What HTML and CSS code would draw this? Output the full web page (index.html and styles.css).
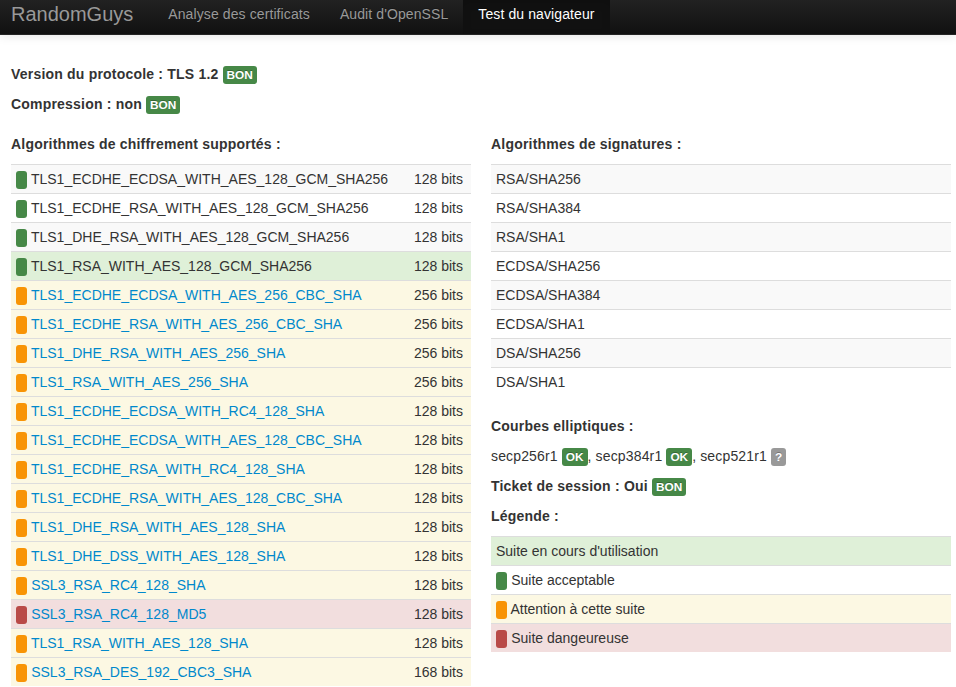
FILE: index.html
```html
<!DOCTYPE html>
<html lang="fr">
<head>
<meta charset="utf-8">
<title>RandomGuys - Test du navigateur</title>
<link rel="stylesheet" href="styles.css">
</head>
<body>
<div class="navbar">
  <div class="nav-inner">
    <a class="brand" href="#">RandomGuys</a>
    <ul class="nav">
      <li><a href="#">Analyse des certificats</a></li>
      <li><a href="#">Audit d'OpenSSL</a></li>
      <li class="active"><a href="#">Test du navigateur</a></li>
    </ul>
  </div>
</div>
<div class="container">
  <p class="strong">Version du protocole : TLS 1.2 <span class="label label-success">BON</span></p>
  <p class="strong">Compression : non <span class="label label-success">BON</span></p>
  <div class="row">
    <div class="col">
      <p class="strong">Algorithmes de chiffrement supportés :</p>
      <table class="table striped">
        <tr><td><span class="label label-success">&nbsp;</span> TLS1_ECDHE_ECDSA_WITH_AES_128_GCM_SHA256</td><td class="bits">128 bits</td></tr>
        <tr><td><span class="label label-success">&nbsp;</span> TLS1_ECDHE_RSA_WITH_AES_128_GCM_SHA256</td><td class="bits">128 bits</td></tr>
        <tr><td><span class="label label-success">&nbsp;</span> TLS1_DHE_RSA_WITH_AES_128_GCM_SHA256</td><td class="bits">128 bits</td></tr>
        <tr class="success"><td><span class="label label-success">&nbsp;</span> TLS1_RSA_WITH_AES_128_GCM_SHA256</td><td class="bits">128 bits</td></tr>
        <tr class="warning"><td><span class="label label-warning">&nbsp;</span> <a href="#">TLS1_ECDHE_ECDSA_WITH_AES_256_CBC_SHA</a></td><td class="bits">256 bits</td></tr>
        <tr class="warning"><td><span class="label label-warning">&nbsp;</span> <a href="#">TLS1_ECDHE_RSA_WITH_AES_256_CBC_SHA</a></td><td class="bits">256 bits</td></tr>
        <tr class="warning"><td><span class="label label-warning">&nbsp;</span> <a href="#">TLS1_DHE_RSA_WITH_AES_256_SHA</a></td><td class="bits">256 bits</td></tr>
        <tr class="warning"><td><span class="label label-warning">&nbsp;</span> <a href="#">TLS1_RSA_WITH_AES_256_SHA</a></td><td class="bits">256 bits</td></tr>
        <tr class="warning"><td><span class="label label-warning">&nbsp;</span> <a href="#">TLS1_ECDHE_ECDSA_WITH_RC4_128_SHA</a></td><td class="bits">128 bits</td></tr>
        <tr class="warning"><td><span class="label label-warning">&nbsp;</span> <a href="#">TLS1_ECDHE_ECDSA_WITH_AES_128_CBC_SHA</a></td><td class="bits">128 bits</td></tr>
        <tr class="warning"><td><span class="label label-warning">&nbsp;</span> <a href="#">TLS1_ECDHE_RSA_WITH_RC4_128_SHA</a></td><td class="bits">128 bits</td></tr>
        <tr class="warning"><td><span class="label label-warning">&nbsp;</span> <a href="#">TLS1_ECDHE_RSA_WITH_AES_128_CBC_SHA</a></td><td class="bits">128 bits</td></tr>
        <tr class="warning"><td><span class="label label-warning">&nbsp;</span> <a href="#">TLS1_DHE_RSA_WITH_AES_128_SHA</a></td><td class="bits">128 bits</td></tr>
        <tr class="warning"><td><span class="label label-warning">&nbsp;</span> <a href="#">TLS1_DHE_DSS_WITH_AES_128_SHA</a></td><td class="bits">128 bits</td></tr>
        <tr class="warning"><td><span class="label label-warning">&nbsp;</span> <a href="#">SSL3_RSA_RC4_128_SHA</a></td><td class="bits">128 bits</td></tr>
        <tr class="error"><td><span class="label label-important">&nbsp;</span> <a href="#">SSL3_RSA_RC4_128_MD5</a></td><td class="bits">128 bits</td></tr>
        <tr class="warning"><td><span class="label label-warning">&nbsp;</span> <a href="#">TLS1_RSA_WITH_AES_128_SHA</a></td><td class="bits">128 bits</td></tr>
        <tr class="warning"><td><span class="label label-warning">&nbsp;</span> <a href="#">SSL3_RSA_DES_192_CBC3_SHA</a></td><td class="bits">168 bits</td></tr>
      </table>
    </div>
    <div class="col">
      <p class="strong">Algorithmes de signatures :</p>
      <table class="table striped sig">
        <tr><td>RSA/SHA256</td></tr>
        <tr><td>RSA/SHA384</td></tr>
        <tr><td>RSA/SHA1</td></tr>
        <tr><td>ECDSA/SHA256</td></tr>
        <tr><td>ECDSA/SHA384</td></tr>
        <tr><td>ECDSA/SHA1</td></tr>
        <tr><td>DSA/SHA256</td></tr>
        <tr><td>DSA/SHA1</td></tr>
      </table>
      <p class="strong">Courbes elliptiques :</p>
      <p class="curves">secp256r1 <span class="label label-success">OK</span>, secp384r1 <span class="label label-success">OK</span>, secp521r1 <span class="label label-default">?</span></p>
      <p class="strong">Ticket de session : Oui <span class="label label-success">BON</span></p>
      <p class="strong">Légende :</p>
      <table class="table striped">
        <tr class="success"><td>Suite en cours d'utilisation</td></tr>
        <tr><td><span class="label label-success">&nbsp;</span> Suite acceptable</td></tr>
        <tr class="warning"><td><span class="label label-warning">&nbsp;</span> Attention à cette suite</td></tr>
        <tr class="error"><td><span class="label label-important">&nbsp;</span> Suite dangeureuse</td></tr>
      </table>
    </div>
  </div>
</div>
</body>
</html>
```
FILE: styles.css
```css
html, body {
  overflow: hidden;
}
body {
  margin: 0;
  font-family: "Liberation Sans", Arial, sans-serif;
  font-size: 14px;
  line-height: 20px;
  color: #333333;
  background: #ffffff;
}
a {
  color: #0088cc;
  text-decoration: none;
}
p {
  margin: 0 0 10px;
}
.strong {
  font-weight: bold;
  letter-spacing: 0.2px;
}
.strong .label {
  letter-spacing: 0;
}
.curves {
  letter-spacing: 0.15px;
}
.curves .label {
  letter-spacing: 0;
}

/* navbar */
.navbar {
  height: 34px;
  background: linear-gradient(to bottom, #222222, #111111);
  border-bottom: 1px solid #252525;
  box-shadow: 0 1px 10px rgba(0, 0, 0, 0.1);
}
.nav-inner {
  display: flex;
  padding-left: 11px;
  height: 34px;
}
.brand {
  display: block;
  font-size: 20px;
  font-weight: 200;
  color: #999999;
  padding: 4px 20px 10px 0;
  line-height: 20px;
}
.nav {
  display: flex;
  margin: 0;
  padding: 0;
  list-style: none;
}
.nav li a {
  display: block;
  padding: 4px 15px 10px;
  color: #999999;
  text-shadow: 0 -1px 0 rgba(0, 0, 0, 0.25);
  line-height: 20px;
  letter-spacing: 0.1px;
}
.nav li.active a {
  color: #ffffff;
  background: #111111;
  box-shadow: inset 0 3px 8px rgba(0, 0, 0, 0.125);
}

/* layout */
.container {
  padding: 29px 0 0 11px;
  width: 940px;
}
.container > p:nth-child(2) {
  margin-bottom: 20px;
}
.row {
  display: flex;
  gap: 20px;
}
.col {
  width: 460px;
}

/* labels */
.label {
  display: inline-block;
  padding: 2px 4px;
  font-size: 11.844px;
  font-weight: bold;
  line-height: 14px;
  color: #ffffff;
  text-shadow: 0 -1px 0 rgba(0, 0, 0, 0.25);
  white-space: nowrap;
  vertical-align: baseline;
  border-radius: 3px;
}
.label-success { background: #468847; }
.label-warning { background: #f89406; }
.label-important { background: #b94a48; }
.label-default { background: #999999; }

/* tables */
.table {
  width: 100%;
  border-collapse: collapse;
  border-spacing: 0;
  margin-bottom: 20px;
}
.table td {
  padding: 4px 5px;
  line-height: 20px;
  border-top: 1px solid #dddddd;
  text-align: left;
  vertical-align: top;
}
.table td.bits {
  white-space: nowrap;
  width: 1%;
  padding-right: 8px;
}
.striped tr:nth-child(odd) td {
  background: #f9f9f9;
}
.table tr.success td { background: #dff0d8; }
.table tr.warning td { background: #fcf8e3; }
.table tr.error td { background: #f2dede; }
```
